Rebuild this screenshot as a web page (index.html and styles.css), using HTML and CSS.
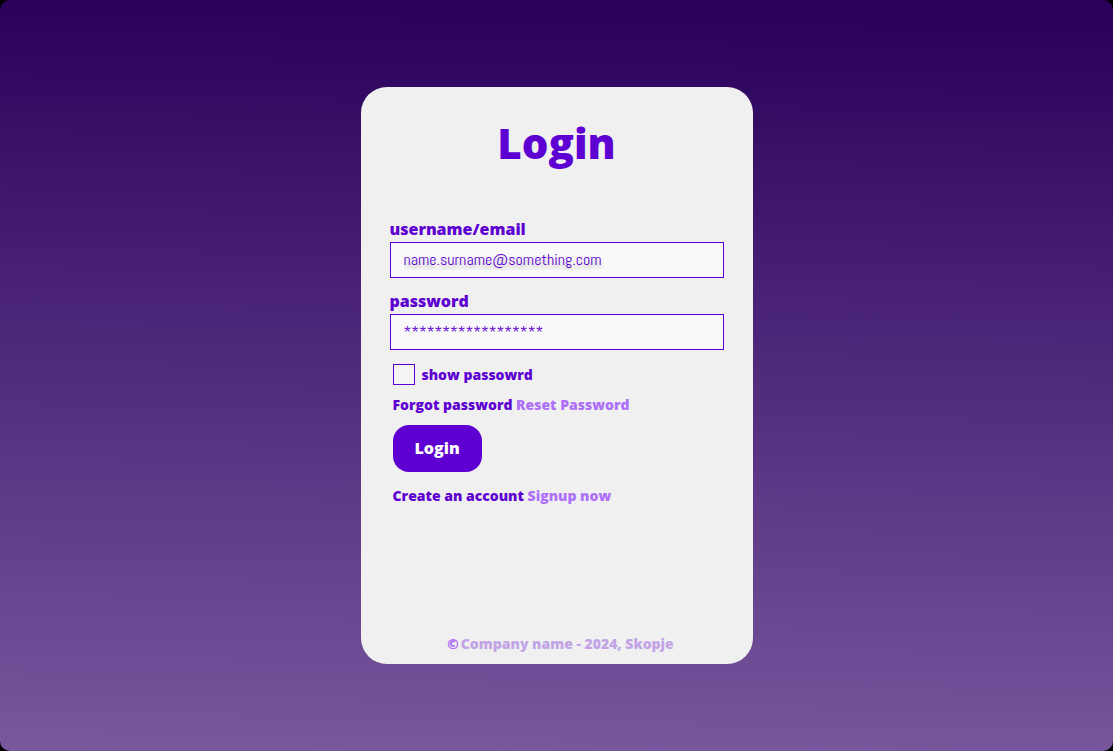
FILE: index.html
```html
<!DOCTYPE html>
<html lang="en">
<head>
<meta charset="utf-8">
<meta name="viewport" content="width=device-width, initial-scale=1">
<title>Login</title>
<link rel="stylesheet" href="styles.css">
</head>
<body>
<div class="page">
  <main class="card">
    <h1 class="title">Login</h1>
    <form class="form">
      <label class="label" for="user">username/email</label>
      <input class="field field-user" id="user" type="text" placeholder="name.surname@something.com">
      <label class="label" for="pass">password</label>
      <input class="field" id="pass" type="password" placeholder="******************">
      <div class="options">
        <div class="check-row">
          <input class="check" id="show" type="checkbox">
          <label for="show">show passowrd</label>
        </div>
        <p class="line">Forgot password <a class="link" href="#reset">Reset Password</a></p>
        <button class="submit" type="submit">Login</button>
        <p class="line">Create an account <a class="link" href="#signup">Signup now</a></p>
      </div>
    </form>
    <footer class="footer"><span class="mark">©</span><span>Company name - 2024, Skopje</span></footer>
  </main>
</div>
</body>
</html>
```
FILE: styles.css
```css
* { box-sizing: border-box; }

body {
  margin: 0;
  background: #000;
  color: #5d00d1;
  font-family: "Open Sans", sans-serif;
  font-size: 14px;
  font-weight: 800;
}

.page {
  display: flex;
  justify-content: center;
  min-height: 100vh;
  padding: 87px 16px;
  border-radius: 10px;
  background: linear-gradient(181deg, #2a005b 2%, #79589e);
}

.card {
  display: flex;
  flex-direction: column;
  width: 100%;
  max-width: 392px;
  padding: 30px 29px 10px;
  border-radius: 26px;
  background: #f0f0f0;
}

.title {
  margin: 0 0 47px;
  font-size: 42px;
  line-height: 52px;
  font-weight: 800;
  text-align: center;
}

.form {
  display: flex;
  flex-direction: column;
}

.label {
  font-size: 16px;
  line-height: 26px;
}

.field {
  width: 100%;
  height: 36px;
  margin: 0 0 10px;
  padding: 0 13px 2px;
  border: 1px solid #5d00d1;
  border-radius: 0;
  background: #f9f9f9;
  color: #5d00d1;
  font-family: Abel, "Roboto Condensed", Roboto, sans-serif;
  font-size: 16px;
  font-weight: 400;
}

.field::placeholder {
  color: #5d00d1;
  opacity: 1;
}

.field-user::placeholder { text-shadow: 0 4px 4px rgba(0, 0, 0, 0.25); }

.options {
  display: flex;
  flex-direction: column;
  align-items: flex-start;
  padding: 4px 3px 0;
}

.check-row {
  display: flex;
  align-items: center;
  gap: 7px;
  line-height: 20px;
}

.check {
  appearance: none;
  width: 22px;
  height: 21px;
  margin: 0;
  border: 1px solid #5d00d1;
  background: #f4f4f4;
}

.check:checked { background: #5d00d1; }

.line {
  margin: 10px 0;
  line-height: 20px;
}

.link {
  color: #ae70f8;
  text-decoration: none;
}

.submit {
  padding: 12px 22px 13px;
  margin-bottom: 4px;
  border: 0;
  border-radius: 16px;
  background: #5d00d1;
  color: #fff;
  font: inherit;
  font-size: 16px;
  line-height: 22px;
}

.footer {
  display: flex;
  justify-content: center;
  gap: 2px;
  margin-top: auto;
  padding-left: 8px;
  color: #c2a4e6;
  line-height: 20px;
}

.mark { color: #b06ff8; }
```
